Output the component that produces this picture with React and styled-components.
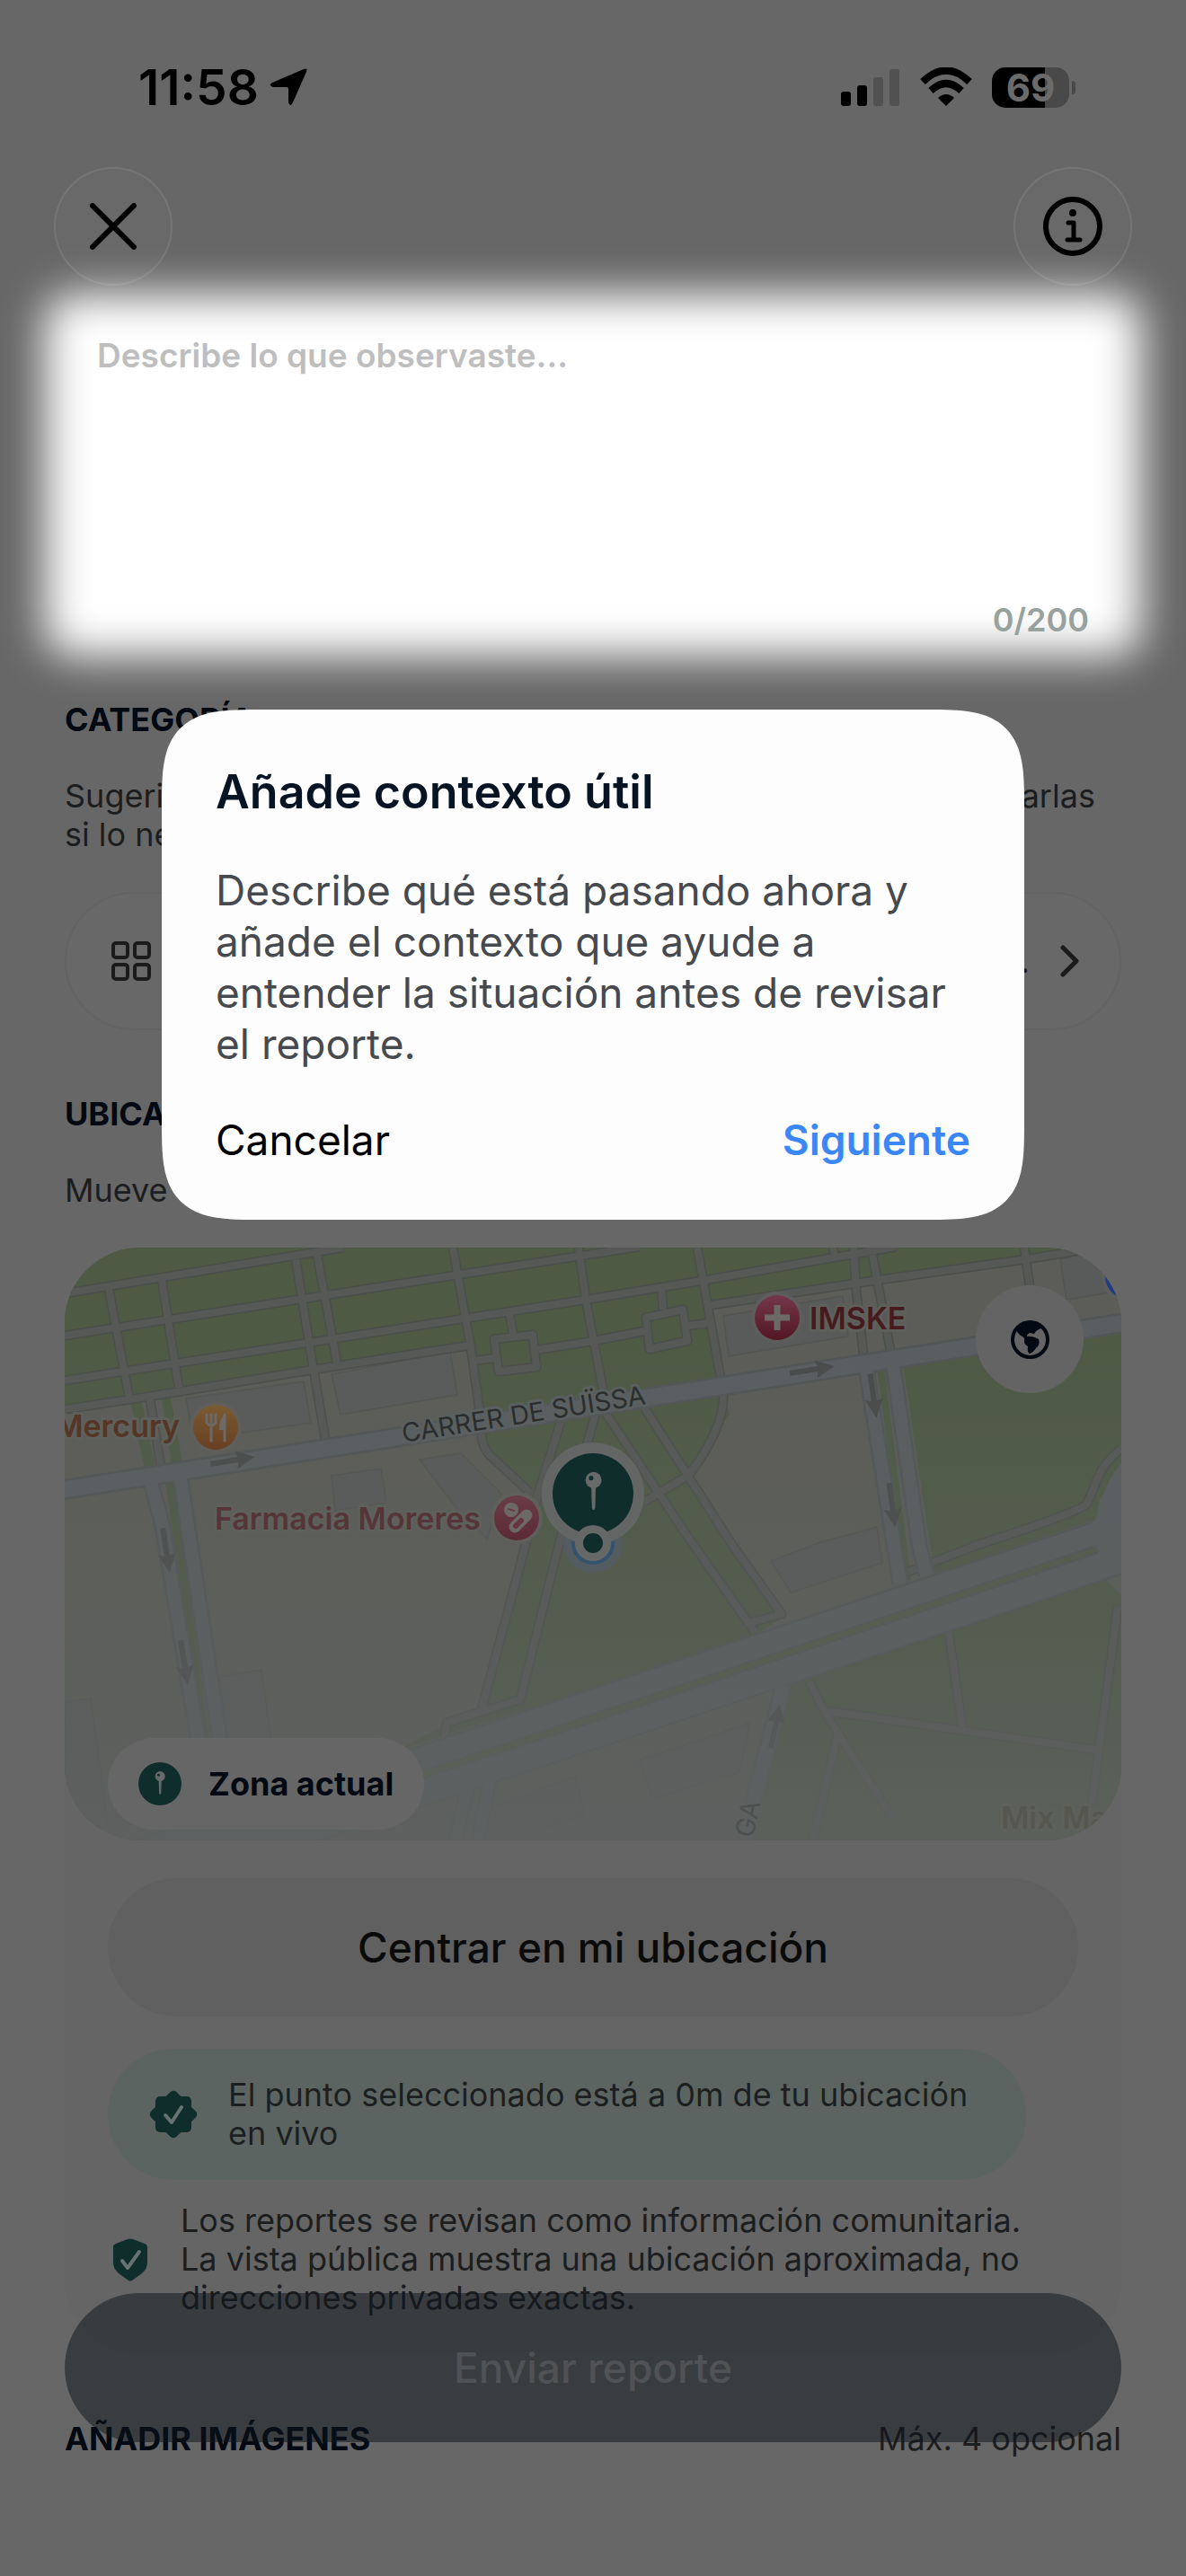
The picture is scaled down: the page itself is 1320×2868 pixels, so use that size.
import React, { useState } from "react";
import styled, { createGlobalStyle } from "styled-components";

const parkPaths = [
  "M0 51L310 0",
  "M0 98L640 -1",
  "M0 148L580 58L714 36L925 -1",
  "M0 180L99 165L276 136L450 109",
  "M719 64L906 36L1070 13L1150 0",
  "M456 126L478 123M525 114L588 104L645 93M693 87L719 84M664 44L666 69M495 73L499 96",
  "M478 102L521 97L525 133L483 138Z",
  "M647 78L688 69L693 104L651 113Z",
  "M49 46L72 168M108 36L127 156M257 13L277 136L290 213M281 8L303 128M95 169L107 244",
  "M432 0L452 111L464 198Q462 221 474 232L519 274",
  "M572 0L580 58L599 158M704 0L731 150Q742 190 695 253L645 283",
  "M855 0L857 9M878 0L881 48L889 118M899 8L919 114M1068 0L1074 43",
  "M602 184L688 314L768 428M645 178L743 331L798 408L757 419",
  "M552 194L527 274L513 331L464 514M592 181L550 331L507 503L425 529L423 544",
  "M1176 224Q1158 238 1151 254L1138 285Q1131 294 1016 331L939 361",
  "M829 483L841 508L861 541L923 638M861 541L833 658M849 516L1147 559M984 429L999 534M1172 401L1143 621",
];

const streets = [
  { d: "M-10 271L1190 82", w: 18 },
  { d: "M96 262Q104 290 109 311L148 544L160 600", w: 14 },
  { d: "M129 258L137 311L172 544L180 600", w: 14 },
  { d: "M892 134L923 331L930 374", w: 14 },
  { d: "M922 131L951 331L959 364", w: 14 },
  { d: "M800 488L763 631L755 670", w: 15 },
  { d: "M450 595L432 670M474 590L458 670", w: 12 },
  { d: "M-100 754L1300 288", w: 62 },
];

const buildings = [
  "135,168 266,149 274,195 143,214",
  "297,141 429,116 437,164 307,186",
  "733,76 866,54 872,99 739,121",
  "297,254 352,246 358,284 301,293",
  "395,236 441,229 486,274 470,324 437,291",
  "1108,13 1176,-4 1176,48 1115,58",
  "786,349 829,333 838,329 904,311 910,351 808,384",
  "172,478 219,470 233,571 185,590",
  "0,506 29,502 48,644 0,650",
  "639,571 763,529 751,584 655,614",
  "476,623 568,589 580,631 490,660",
];

const arrows = [
  [187, 237, -9],
  [832, 136, -9],
  [113, 337, 81],
  [133, 462, 81],
  [900, 165, 82],
  [921, 287, 82],
  [791, 533, -78],
];

const parks = [
  "0,0 1123,0 719,64 735,155 467,200 450,110 0,184",
  "467,205 733,165 740,185 695,253 743,331 798,412 768,432 365,562 430,528 464,514 519,278 470,225",
  "933,131 1176,96 1176,245 1152,280 1147,303 968,363",
  "808,486 1159,370 1176,388 1176,660 757,660",
  "74,174 86,172 101,244 89,246",
  "108,168 118,167 131,240 119,242",
  "112,262 121,260 163,560 156,560",
  "904,134 912,133 942,370 936,372",
];

function PinGlyph() {
  return (
    <g fill="#686a69">
      <circle cx="12" cy="6" r="5" />
      <path d="M10.600 10L13.400 10L13 23Q12 26 11 23Z" />
      <circle cx="10.500" cy="4.800" r="1.400" fill="#0f2d2a" />
    </g>
  );
}

function MapView() {
  return (
    <MapSvg viewBox="0 0 1176 660" preserveAspectRatio="xMidYMid slice" role="img" aria-label="Mapa">
      <defs>
        <linearGradient id="fade" x1="0" y1="0" x2="0" y2="1">
          <stop offset="0.15" stopColor="#5e6160" stopOpacity="0" />
          <stop offset="0.7" stopColor="#5e6160" stopOpacity="0.5" />
          <stop offset="1" stopColor="#5e6160" stopOpacity="0.85" />
        </linearGradient>
        <linearGradient id="food" x1="0" y1="0" x2="0" y2="1">
          <stop offset="0" stopColor="#7a5b33" />
          <stop offset="1" stopColor="#693f22" />
        </linearGradient>
        <linearGradient id="health" x1="0" y1="0" x2="0" y2="1">
          <stop offset="0" stopColor="#75364c" />
          <stop offset="1" stopColor="#521722" />
        </linearGradient>
        <linearGradient id="pharmacy" x1="0" y1="0" x2="0" y2="1">
          <stop offset="0" stopColor="#6a3c49" />
          <stop offset="1" stopColor="#5c2a33" />
        </linearGradient>
      </defs>
      <rect width="1176" height="660" fill="#5c5d58" />
      {parks.map((p) => (
        <polygon key={p} points={p} fill="#4e5a44" />
      ))}
      {buildings.map((b) => (
        <polygon key={b} points={b} fill="#595b5a" stroke="#535553" strokeWidth="1.500" />
      ))}
      <g fill="none" strokeLinejoin="round">
        {parkPaths.map((d) => (
          <path key={d} d={d} stroke="#4b4e4b" strokeWidth="11" />
        ))}
        {parkPaths.map((d) => (
          <path key={d} d={d} stroke="#565856" strokeWidth="8" />
        ))}
        {streets.map((s) => (
          <path key={s.d} d={s.d} stroke="#535657" strokeWidth={s.w + 5} />
        ))}
        {streets.map((s) => (
          <path key={s.d} d={s.d} stroke="#5a5e60" strokeWidth={s.w} />
        ))}
        <path d="M300 620L1149 336" stroke="#535657" strokeWidth="10" />
        <path d="M300 620L1149 336" stroke="#515c47" strokeWidth="6" />
      </g>
      <path d="M1150 300Q1156 262 1176 240L1176 330L1120 330Z" fill="#5a5e60" />
      {arrows.map(([x, y, r]) => (
        <path
          key={`${x}-${y}`}
          d="M-25 -3L6 -3L4 -10L25 0L4 10L6 3L-25 3Z"
          fill="#494b4b"
          transform={`translate(${x} ${y}) rotate(${r})`}
        />
      ))}
      <rect width="1176" height="660" fill="url(#fade)" />

      <MapLabel x="128" y="211" $color="#553525" textAnchor="end">Mercury</MapLabel>
      <circle cx="168" cy="200" r="29" fill="#5f5e5a" />
      <circle cx="168" cy="200" r="25" fill="url(#food)" />
      <path
        d="M158 186V195M163 186V195M168 186V195M158 195Q163 201 168 195M163 197V215M178 186V215"
        fill="none"
        stroke="#6c6966"
        strokeWidth="3"
        strokeLinecap="round"
      />
      <path d="M178 186Q172 190 172 203L178 203Z" fill="#6c6966" />

      <MapLabel x="463" y="314" $color="#563538" textAnchor="end">Farmacia Moreres</MapLabel>
      <circle cx="503" cy="301" r="29" fill="#5f5f5c" />
      <circle cx="503" cy="301" r="25" fill="url(#pharmacy)" />
      <circle cx="497" cy="292" r="8" fill="#6c6966" />
      <path d="M493 291L501 293" stroke="#6a3a48" strokeWidth="2" />
      <path d="M501 311L514 298" stroke="#6c6966" strokeWidth="13" strokeLinecap="round" />
      <path d="M502 310L508 304" stroke="#673540" strokeWidth="6" strokeLinecap="round" />

      <circle cx="793" cy="78" r="29" fill="#5c5d5c" />
      <circle cx="793" cy="78" r="25" fill="url(#health)" />
      <path d="M793 64V92M779 78H807" stroke="#6c6966" strokeWidth="7" />
      <MapLabel x="829" y="91" $color="#471b1e">IMSKE</MapLabel>

      <StreetLabel x="0" y="0" transform="translate(377 217) rotate(-9)">CARRER DE SUÏSSA</StreetLabel>
      <StreetLabel x="0" y="0" $faint transform="translate(766 658) rotate(-78)">GA</StreetLabel>
      <MapLabel x="1042" y="647" $color="#565750">Mix Ma</MapLabel>
      <circle cx="1183" cy="32" r="29" fill="#5c5d5c" />
      <circle cx="1183" cy="32" r="25" fill="#1f3c82" />

      <circle cx="588" cy="329" r="33" fill="#535c60" />
      <circle cx="588" cy="329" r="22" fill="none" stroke="#33536f" strokeWidth="4" />
      <circle cx="588" cy="274" r="57" fill="#646665" />
      <circle cx="588" cy="274" r="45" fill="#0f2d2a" />
      <circle cx="588" cy="329" r="20" fill="#666867" />
      <circle cx="588" cy="329" r="11" fill="#0f2d2a" />
      <g transform="translate(567 248) scale(1.800)">
        <PinGlyph />
      </g>
    </MapSvg>
  );
}

function App() {
  const [text, setText] = useState("");

  return (
    <>
      <GlobalStyle />
      <Screen>
        <StatusBar>
          <Clock>
            11:58
            <svg width="42" height="42" viewBox="0 0 42 42">
              <path d="M38 1Q43 -1 41 4L26 38Q23 44 21 38V23Q21 21 19 21H4Q-2 19 3 16Z" />
            </svg>
          </Clock>
          <Indicators>
            <svg width="66" height="44" viewBox="0 0 66 44">
              <rect x="0" y="27" width="11" height="16" rx="3" />
              <rect x="18" y="20" width="11" height="23" rx="3" />
              <rect x="36" y="11" width="11" height="32" rx="3" fill="#515151" />
              <rect x="54" y="2" width="11" height="41" rx="3" fill="#515151" />
            </svg>
            <svg width="58" height="44" viewBox="0 0 58 44">
              <path d="M29 43L20 34Q29 26 38 34Z" strokeLinejoin="round" />
              <path d="M3 16Q29 -9 55 16M12 26Q29 10 46 26" fill="none" stroke="#000" strokeWidth="8" />
            </svg>
            <Battery>
              <span>69</span>
            </Battery>
          </Indicators>
        </StatusBar>

        <NavBar>
          <RoundButton aria-label="Cerrar">
            <svg width="52" height="52" viewBox="0 0 52 52">
              <path d="M3 3L49 49M49 3L3 49" stroke="#000" strokeWidth="6" strokeLinecap="round" />
            </svg>
          </RoundButton>
          <RoundButton aria-label="Información">
            <svg width="66" height="66" viewBox="0 0 66 66" fill="none" stroke="#000">
              <circle cx="33" cy="33" r="30" strokeWidth="6" />
              <path d="M28 29H34V48M27 48H41" strokeWidth="5" strokeLinecap="round" strokeLinejoin="round" />
              <circle cx="33" cy="18" r="4" fill="#000" stroke="none" />
            </svg>
          </RoundButton>
        </NavBar>

        <Content>
          <Description>
            <Field
              aria-label="Descripción"
              placeholder="Describe lo que observaste..."
              maxLength={200}
              value={text}
              onChange={(e) => setText(e.target.value)}
            />
            <Counter>{text.length}/200</Counter>
          </Description>

          <Section $first>
            <SectionTitle>CATEGORÍA</SectionTitle>
            <Hint>
              Sugerimos categorías según tu descripción. Aquí puedes ajustarlas
              <br />
              si lo necesitas.
            </Hint>
            <CategoryButton>
              <svg width="44" height="44" viewBox="0 0 44 44" fill="none" stroke="#1b1b1b" strokeWidth="4">
                <rect x="2" y="2" width="16" height="16" rx="3" />
                <rect x="26" y="2" width="16" height="16" rx="3" />
                <rect x="2" y="26" width="16" height="16" rx="3" />
                <rect x="26" y="26" width="16" height="16" rx="3" />
              </svg>
              <span>Elegir categoría...</span>
              <svg width="22" height="36" viewBox="0 0 22 36" fill="none" stroke="#1b1b1b" strokeWidth="5">
                <path d="M3 3L18 18L3 33" strokeLinecap="round" strokeLinejoin="round" />
              </svg>
            </CategoryButton>
          </Section>

          <Section>
            <SectionTitle>UBICACIÓN</SectionTitle>
            <Hint>Mueve el mapa para ajustar</Hint>
            <LocationCard>
              <MapFrame>
                <MapView />
                <GlobeButton aria-label="Cambiar mapa">
                  <svg width="43" height="43" viewBox="0 0 43 43" fill="#020912">
                    <circle cx="21.500" cy="21.500" r="19.500" fill="none" stroke="#020912" strokeWidth="4" />
                    <path d="M6 10Q12 1 22 2Q30 3 34 9Q29 10 26 15L21 14Q18 15 18 18Q24 17 31 21Q33 27 28 31Q25 36 21 37Q18 36 19 29Q14 26 15 22Q16 20 13 18Q8 16 6 10Z" />
                  </svg>
                </GlobeButton>
                <ZoneChip>
                  <svg width="48" height="48" viewBox="0 0 48 48">
                    <circle cx="24" cy="24" r="24" fill="#0f2d2a" />
                    <g transform="translate(11 9) scale(1.100)">
                      <PinGlyph />
                    </g>
                  </svg>
                  Zona actual
                </ZoneChip>
              </MapFrame>
              <LocationBody>
                <CenterButton>Centrar en mi ubicación</CenterButton>
                <Verified>
                  <svg width="54" height="54" viewBox="0 0 54 54">
                    <g fill="#0f2d2a">
                      <rect x="7" y="7" width="40" height="40" rx="5" />
                      <rect x="7" y="7" width="40" height="40" rx="5" transform="rotate(45 27 27)" />
                    </g>
                    <CheckMark d="M18 28L25 36L36 19" />
                  </svg>
                  <p>El punto seleccionado está a 0m de tu ubicación en vivo</p>
                </Verified>
                <Privacy>
                  <svg width="40" height="48" viewBox="0 0 40 48">
                    <path d="M17 1Q20 0 23 1L36 6Q39 7 39 10V27Q39 34 33 39L22 47Q20 48 18 47L7 39Q1 34 1 27V10Q1 7 4 6Z" fill="#0f2d2a" />
                    <CheckMark d="M11 25L17 33L30 15" />
                  </svg>
                  <p>
                    Los reportes se revisan como información comunitaria. La vista pública muestra una ubicación
                    aproximada, no direcciones privadas exactas.
                  </p>
                </Privacy>
              </LocationBody>
            </LocationCard>
          </Section>

          <ImagesRow>
            <SectionTitle>AÑADIR IMÁGENES</SectionTitle>
            <Hint>Máx. 4 opcional</Hint>
          </ImagesRow>
        </Content>

        <SubmitButton>Enviar reporte</SubmitButton>

        <Dialog role="dialog" aria-labelledby="tip-title">
          <h2 id="tip-title">Añade contexto útil</h2>
          <p>
            Describe qué está pasando ahora y añade el contexto que ayude a entender la situación antes de revisar el
            reporte.
          </p>
          <DialogActions>
            <DialogButton>Cancelar</DialogButton>
            <DialogButton $primary>Siguiente</DialogButton>
          </DialogActions>
        </Dialog>
      </Screen>
    </>
  );
}

const GlobalStyle = createGlobalStyle`
  * {
    box-sizing: border-box;
  }
  body {
    margin: 0;
    background: #676767;
    font-family: Inter, "Liberation Sans", sans-serif;
  }
  h2, p {
    margin: 0;
  }
  button {
    font-family: inherit;
    border: none;
    padding: 0;
    background: none;
    cursor: pointer;
  }
`;

const Screen = styled.main`
  position: relative;
  min-height: 100vh;
  overflow: hidden;
  padding-bottom: 132px;
`;

const StatusBar = styled.header`
  display: flex;
  justify-content: space-between;
  align-items: center;
  height: 186px;
  padding: 8px 130px 0 154px;
`;

const Clock = styled.div`
  display: flex;
  align-items: center;
  gap: 12px;
  font-size: 55px;
  font-weight: 600;
  color: #000;
`;

const Indicators = styled.div`
  display: flex;
  align-items: center;
  gap: 22px;
`;

const Battery = styled.div`
  position: relative;
  width: 86px;
  height: 45px;
  border-radius: 15px;
  background: linear-gradient(to right, #000 69%, #494949 69%);
  color: #6b6b6b;
  font-size: 42px;
  font-weight: 700;
  line-height: 45px;
  text-align: center;
  &::after {
    content: "";
    position: absolute;
    right: -7px;
    top: 15px;
    width: 4px;
    height: 15px;
    border-radius: 0 4px 4px 0;
    background: #494949;
  }
`;

const NavBar = styled.nav`
  position: relative;
  z-index: 2;
  display: flex;
  justify-content: space-between;
  padding: 0 60px;
`;

const RoundButton = styled.button`
  display: flex;
  align-items: center;
  justify-content: center;
  width: 132px;
  height: 132px;
  border-radius: 50%;
  border: 2px solid rgba(255, 255, 255, 0.08);
  background: rgba(255, 255, 255, 0.02);
`;

const Content = styled.div`
  display: flex;
  flex-direction: column;
  padding: 30px 72px 0;
`;

const Description = styled.div`
  position: relative;
  display: flex;
  flex-direction: column;
  height: 394px;
  padding: 26px 36px 30px;
  &::before {
    content: "";
    position: absolute;
    z-index: -1;
    inset: -20px -22px 12px;
    border-radius: 30px;
    background: #fff;
    filter: blur(24px);
  }
`;

const Field = styled.textarea`
  flex: 1;
  border: none;
  outline: none;
  resize: none;
  padding: 0;
  background: transparent;
  font: 600 37px/43px Inter, "Liberation Sans", sans-serif;
  color: #071423;
  &::placeholder {
    color: #bebebf;
    opacity: 1;
  }
`;

const Counter = styled.span`
  align-self: flex-end;
  font-size: 36px;
  font-weight: 600;
  line-height: 43px;
  color: #97a19e;
`;

const Section = styled.section`
  display: flex;
  flex-direction: column;
  gap: 42px;
  padding-top: ${(props) => (props.$first ? "38px" : "72px")};
`;

const SectionTitle = styled.h2`
  font-size: 36px;
  font-weight: 700;
  line-height: 43px;
  color: #020912;
`;

const Hint = styled.p`
  font-size: 36px;
  line-height: 43px;
  color: #1c1d1e;
`;

const CategoryButton = styled.button`
  display: flex;
  align-items: center;
  gap: 34px;
  height: 154px;
  padding: 0 44px 0 50px;
  border-radius: 77px;
  border: 2px solid #636363;
  background: #686868;
  font-size: 36px;
  color: #1c1d1e;
  span {
    margin-left: auto;
  }
`;

const LocationCard = styled.div`
  border-radius: 84px;
  background: #656565;
`;

const MapFrame = styled.div`
  position: relative;
  height: 660px;
  border-radius: 84px;
  overflow: hidden;
`;

const MapSvg = styled.svg`
  display: block;
  width: 100%;
  height: 100%;
`;

const MapLabel = styled.text`
  font-size: 34px;
  font-weight: 600;
  fill: ${(props) => props.$color};
  stroke: #5e605c;
  stroke-width: 6px;
  stroke-linejoin: round;
  paint-order: stroke;
`;

const StreetLabel = styled.text`
  font-size: 29px;
  fill: ${(props) => (props.$faint ? "#4f5150" : "#2c2d2d")};
  stroke: #5a5f60;
  stroke-width: ${(props) => (props.$faint ? "0" : "6px")};
  stroke-linejoin: round;
  paint-order: stroke;
`;

const CheckMark = styled.path`
  fill: none;
  stroke: #667371;
  stroke-width: 4px;
  stroke-linecap: round;
  stroke-linejoin: round;
`;

const GlobeButton = styled.button`
  position: absolute;
  top: 42px;
  right: 42px;
  display: flex;
  align-items: center;
  justify-content: center;
  width: 120px;
  height: 120px;
  border-radius: 50%;
  background: #646464;
`;

const ZoneChip = styled.div`
  position: absolute;
  left: 48px;
  bottom: 12px;
  display: flex;
  align-items: center;
  gap: 30px;
  height: 102px;
  padding: 0 34px;
  border-radius: 51px;
  background: #666;
  font-size: 36px;
  font-weight: 700;
  color: #020912;
`;

const LocationBody = styled.div`
  display: flex;
  flex-direction: column;
  padding: 42px 48px;
`;

const CenterButton = styled.button`
  height: 154px;
  border-radius: 77px;
  background: #606060;
  font-size: 46px;
  font-weight: 500;
  color: #0a0a0a;
`;

const Verified = styled.div`
  display: flex;
  align-items: center;
  gap: 34px;
  height: 146px;
  margin: 36px 58px 24px 0;
  padding: 0 46px;
  border-radius: 73px;
  background: #5c6462;
  font-size: 36px;
  line-height: 43px;
  color: #1c1f20;
  svg {
    flex-shrink: 0;
  }
`;

const Privacy = styled.div`
  display: flex;
  align-items: center;
  gap: 36px;
  padding: 0 36px 0 5px;
  font-size: 36px;
  line-height: 43px;
  color: #1c1d1e;
  svg {
    flex-shrink: 0;
  }
`;

const ImagesRow = styled.div`
  display: flex;
  justify-content: space-between;
  padding-top: 72px;
`;

const SubmitButton = styled.button`
  position: absolute;
  left: 72px;
  right: 72px;
  bottom: 150px;
  height: 166px;
  border-radius: 83px;
  background: rgba(14, 20, 26, 0.5);
  font-size: 46px;
  font-weight: 500;
  color: #505255;
`;

const Dialog = styled.div`
  position: absolute;
  z-index: 3;
  top: 790px;
  left: 180px;
  right: 180px;
  display: flex;
  flex-direction: column;
  gap: 50px;
  padding: 60px;
  border-radius: 72px;
  background: #fdfdfd;
  @supports (corner-shape: superellipse(1.7)) {
    border-radius: 108px;
    corner-shape: superellipse(1.7);
  }
  h2 {
    font-size: 52px;
    font-weight: 600;
    line-height: 63px;
    color: #071423;
  }
  p {
    font-size: 46px;
    line-height: 57px;
    color: #46494e;
  }
`;

const DialogActions = styled.div`
  display: flex;
  justify-content: space-between;
`;

const DialogButton = styled.button`
  font-size: 46px;
  font-weight: ${(props) => (props.$primary ? 600 : 400)};
  line-height: 57px;
  color: ${(props) => (props.$primary ? "#3b87f7" : "#000")};
`;

export default App;
